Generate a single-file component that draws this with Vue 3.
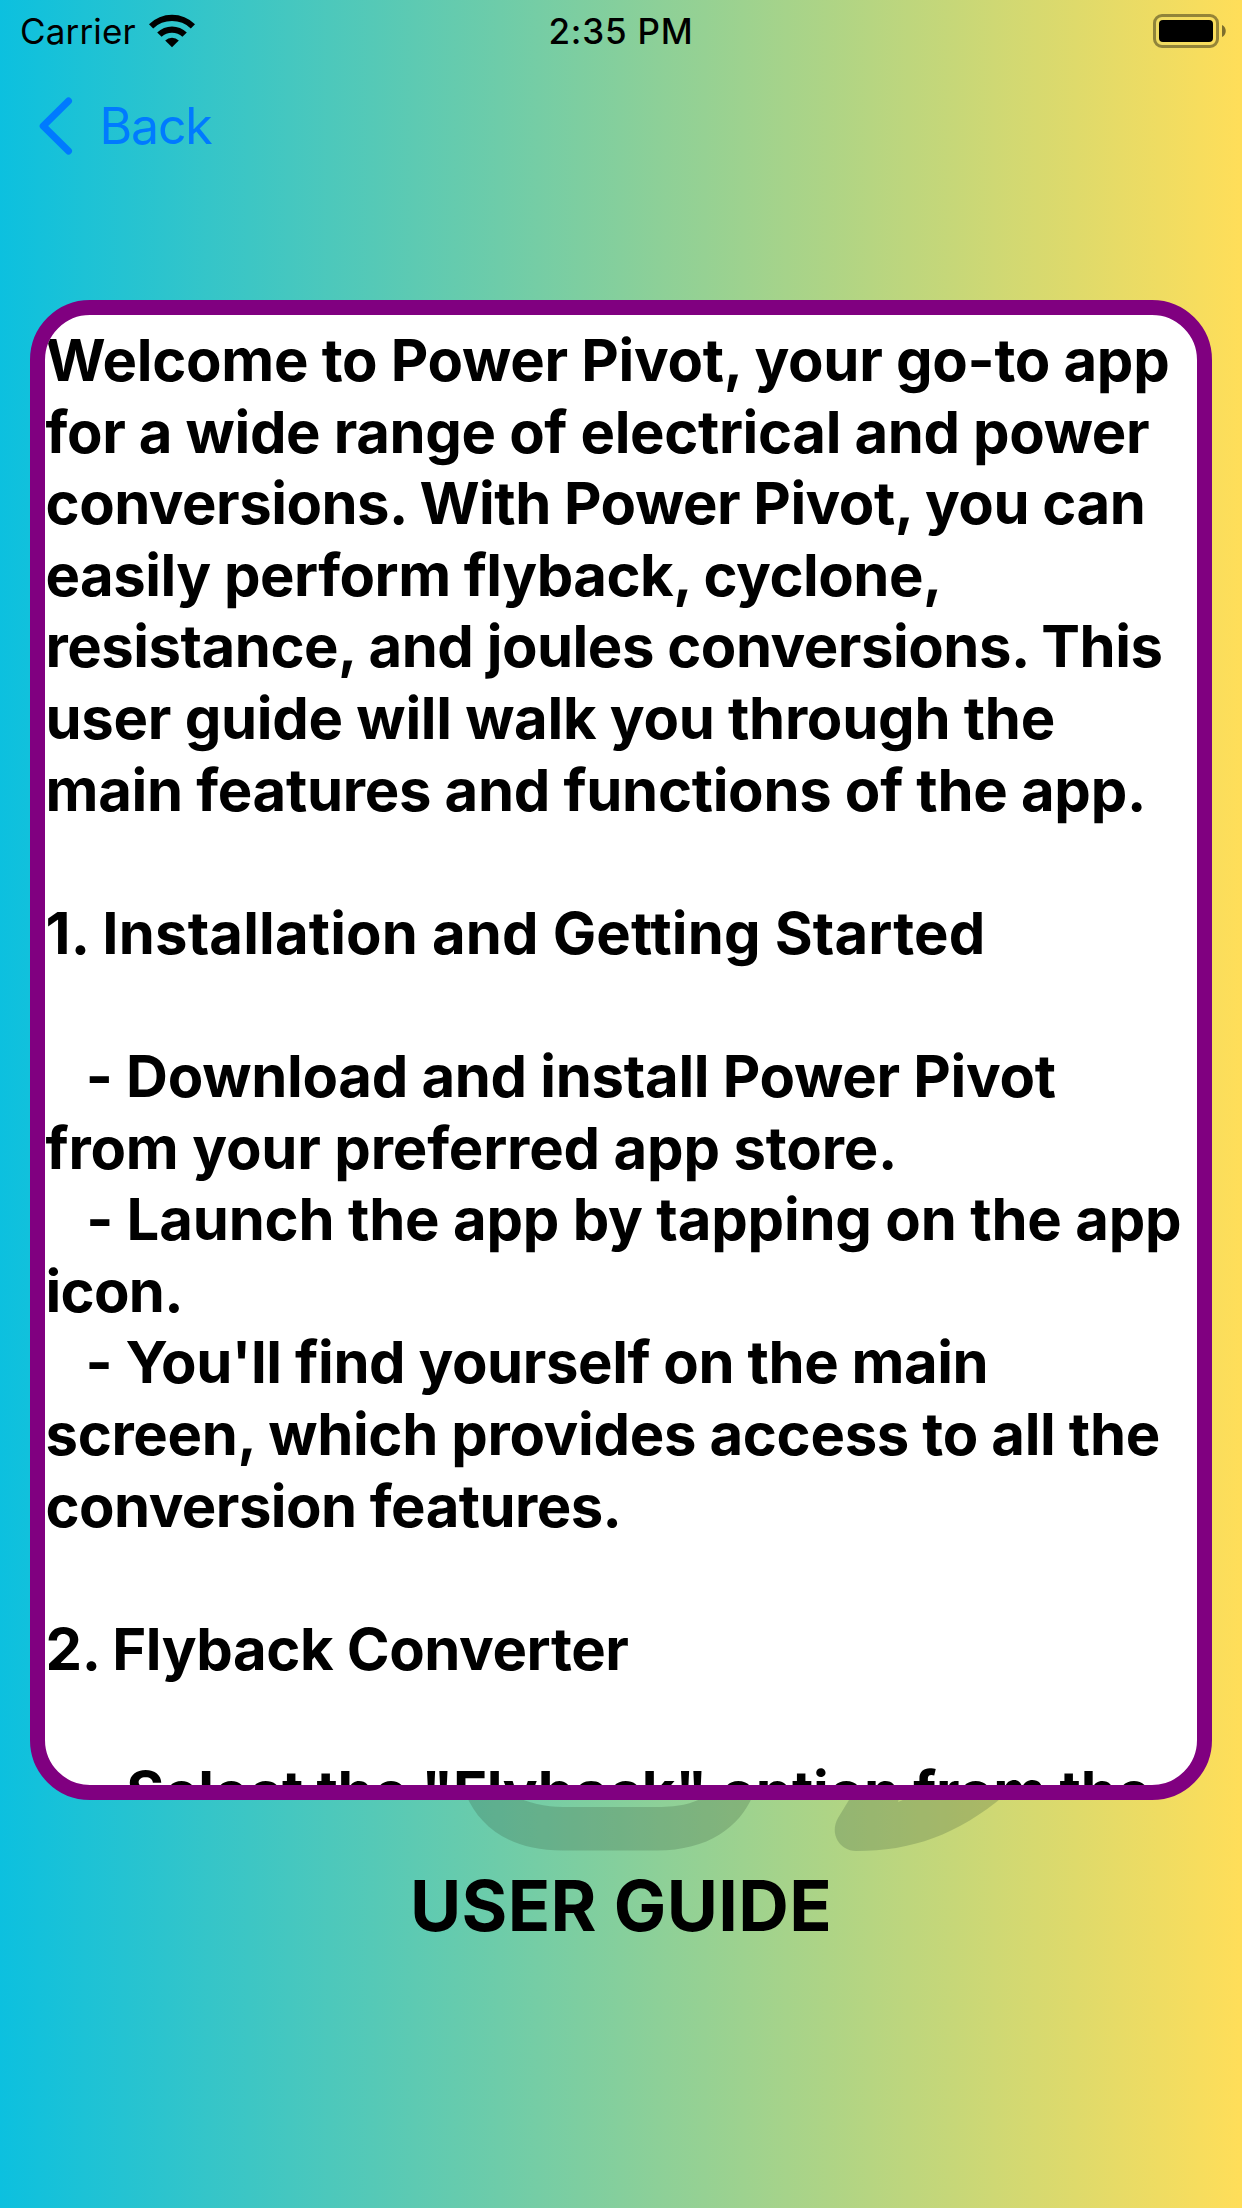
<script setup>
// Each line of the guide with its tracking in pixels.
const lines = [
  ['Welcome to Power Pivot, your go-to app', -0.29],
  ['for a wide range of electrical and power', -0.35],
  ['conversions. With Power Pivot, you can', -0.5],
  ['easily perform flyback, cyclone,', -0.51],
  ['resistance, and joules conversions. This', -0.48],
  ['user guide will walk you through the', -0.27],
  ['main features and functions of the app.', -0.29],
  ['', 0],
  ['1. Installation and Getting Started', 0.16],
  ['', 0],
  ['   - Download and install Power Pivot', -0.29],
  ['from your preferred app store.', -0.16],
  ['   - Launch the app by tapping on the app', -0.19],
  ['icon.', -0.7],
  ["   - You'll find yourself on the main", -0.43],
  ['screen, which provides access to all the', -0.33],
  ['conversion features.', -0.55],
  ['', 0],
  ['2. Flyback Converter', -0.4],
  ['', 0],
  ['   - Select the "Flyback" option from the', -0.25],
]
</script>

<template>
  <main class="screen">
    <header class="status">
      <div class="carrier">
        <span>Carrier</span>
        <svg class="wifi" width="46" height="34" viewBox="0 0 46 34">
          <path d="M0 10.2a33 33 0 0 1 46 0l-4.2 4.3a27 27 0 0 0-37.6 0z" />
          <path d="M8.2 18.4a21.3 21.3 0 0 1 29.6 0l-4.4 4.4a15.1 15.1 0 0 0-20.8 0z" />
          <path d="M16.2 26.4a9.9 9.9 0 0 1 13.6 0L23 33.3z" />
        </svg>
      </div>
      <span class="time">2:35 PM</span>
      <svg class="battery" width="74" height="34" viewBox="0 0 74 34">
        <rect x="1.5" y="1.5" width="63" height="31" rx="7.5" fill="none" stroke="#000" stroke-opacity=".4" stroke-width="3" />
        <rect x="6" y="6" width="54" height="22" rx="4" />
        <path d="M69 11c5 2 5 10 0 12z" fill-opacity=".5" />
      </svg>
    </header>

    <nav class="nav">
      <svg width="34" height="58" viewBox="0 0 34 58">
        <path d="M29.5 4L4.2 29l25.3 25" fill="none" stroke="#007aff" stroke-width="7" stroke-linecap="round" stroke-linejoin="round" />
      </svg>
      <span>Back</span>
    </nav>

    <section class="guide">
      <p v-for="([text, tracking], i) in lines" :key="i" :style="{ letterSpacing: tracking + 'px' }">{{ text }}</p>
    </section>

    <svg class="mark" width="560" height="60" viewBox="460 1795 560 60">
      <path d="M466 1795C480 1827 510 1850.5 563 1850.5H657C708 1850.5 740 1827 753 1795H708C694 1803 682 1807 657 1807H563C545 1807 528 1803 512 1795Z" />
      <path d="M852 1795L838 1818C829 1834 840 1851 856 1851C912 1851 957 1835 1005 1795H915L898 1802L900 1795Z" />
    </svg>

    <h1>USER GUIDE</h1>
  </main>
</template>

<style>
body {
  margin: 0;
}
</style>

<style scoped>
.screen {
  position: relative;
  display: flex;
  flex-direction: column;
  box-sizing: border-box;
  width: 1242px;
  height: 2208px;
  overflow: hidden;
  background: linear-gradient(90deg, #0cc0df, #ffde59);
  color: #000;
  font-family: Inter, "Liberation Sans", sans-serif;
}
.status {
  display: grid;
  grid-template-columns: 1fr auto 1fr;
  height: 60px;
  padding: 0 15px;
  box-sizing: border-box;
  align-items: center;
  font-size: 35px;
  line-height: 62px;
}
.carrier {
  display: flex;
  align-items: center;
  gap: 13px;
  padding-left: 5px;
  letter-spacing: 0.15px;
}
.time {
  font-weight: 500;
  letter-spacing: 0.8px;
}
.battery {
  justify-self: end;
}
.nav {
  display: flex;
  align-items: center;
  height: 132px;
  padding-left: 39px;
  gap: 26.5px;
  color: #007aff;
  font-size: 50px;
  letter-spacing: -1.2px;
}
.guide {
  position: relative;
  z-index: 1;
  box-sizing: border-box;
  width: 1182px;
  height: 1500px;
  margin: 108px 0 0 30px;
  padding: 10px 0 0 0.5px;
  border: 15px solid #800080;
  border-radius: 60px;
  background: #fff;
  overflow: hidden;
}
.guide p {
  height: 71.6px;
  margin: 0;
  font-size: 58px;
  font-weight: 700;
  line-height: 71.6px;
  white-space: pre;
  font-feature-settings: "calt" 0;
}
.mark {
  position: absolute;
  left: 460px;
  top: 1795px;
  fill: #2f4a30;
  fill-opacity: 0.22;
}
h1 {
  margin: 62px 0 0;
  text-align: center;
  font-size: 70px;
  font-weight: 700;
  line-height: 88px;
  letter-spacing: 0.35px;
}
</style>
